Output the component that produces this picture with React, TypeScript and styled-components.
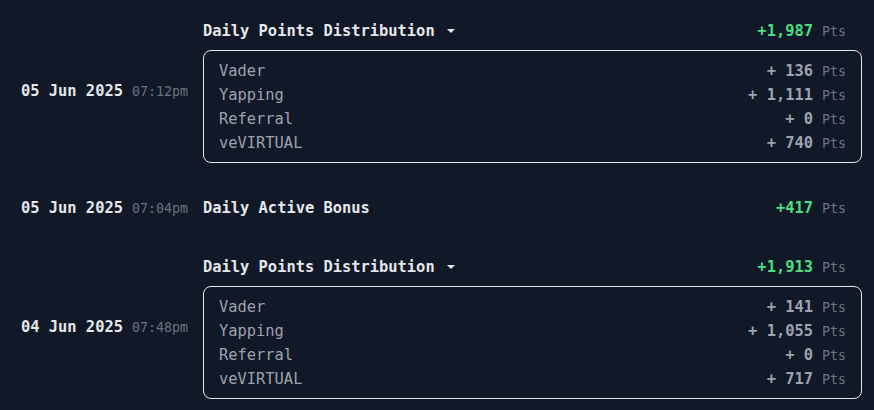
import React from 'react';
import styled, { createGlobalStyle } from 'styled-components';

const GlobalStyle = createGlobalStyle`
  html, body {
    margin: 0;
    background: #111827;
  }
  body {
    font-family: 'DejaVu Sans Mono', 'Liberation Mono', monospace;
  }
`;

const List = styled.div`
  display: flex;
  flex-direction: column;
  gap: 32px;
  padding: 18px 12px 0 21px;
`;

const Entry = styled.div<{ $single?: boolean }>`
  display: flex;
  align-items: center;
  padding-bottom: ${(p) => (p.$single ? '1px' : '0')};
`;

const When = styled.div`
  width: 182px;
  flex-shrink: 0;
  display: flex;
  align-items: baseline;
  gap: 9px;
  white-space: nowrap;
`;

const DateText = styled.span`
  color: #e5e7eb;
  font-weight: bold;
  font-size: 15.4px;
`;

const TimeText = styled.span`
  color: #6b7280;
  font-size: 13.3px;
`;

const Body = styled.div`
  flex: 1;
  display: flex;
  flex-direction: column;
  gap: 7px;
`;

const Header = styled.div<{ $single?: boolean }>`
  display: flex;
  align-items: center;
  justify-content: space-between;
  height: ${(p) => (p.$single ? '26px' : '25px')};
  padding-right: 16px;
`;

const Title = styled.div`
  display: flex;
  align-items: center;
  gap: 12px;
  color: #e5e7eb;
  font-weight: bold;
  font-size: 15.4px;
`;

const Caret = styled.span`
  width: 0;
  height: 0;
  border-left: 4px solid transparent;
  border-right: 4px solid transparent;
  border-top: 4px solid #e5e7eb;
`;

const Amount = styled.div`
  display: flex;
  align-items: baseline;
  gap: 9px;
`;

const Value = styled.span<{ $green?: boolean }>`
  color: ${(p) => (p.$green ? '#4ade80' : '#9ca3af')};
  font-weight: bold;
  font-size: 15.4px;
  white-space: pre;
`;

const Unit = styled.span`
  color: #6b7280;
  font-size: 13.3px;
`;

const Box = styled.div`
  border: 1px solid #e5e7eb;
  border-radius: 8px;
  padding: 8px 15px 7px;
`;

const Row = styled.div`
  display: flex;
  align-items: center;
  justify-content: space-between;
  height: 24px;
`;

const Label = styled.span`
  color: #9ca3af;
  font-size: 15.4px;
`;

type Part = { label: string; value: string };

type Item = {
  date: string;
  time: string;
  title: string;
  total: string;
  parts?: Part[];
};

const items: Item[] = [
  {
    date: '05 Jun 2025',
    time: '07:12pm',
    title: 'Daily Points Distribution',
    total: '+1,987',
    parts: [
      { label: 'Vader', value: '+ 136' },
      { label: 'Yapping', value: '+ 1,111' },
      { label: 'Referral', value: '+ 0' },
      { label: 'veVIRTUAL', value: '+ 740' },
    ],
  },
  {
    date: '05 Jun 2025',
    time: '07:04pm',
    title: 'Daily Active Bonus',
    total: '+417',
  },
  {
    date: '04 Jun 2025',
    time: '07:48pm',
    title: 'Daily Points Distribution',
    total: '+1,913',
    parts: [
      { label: 'Vader', value: '+ 141' },
      { label: 'Yapping', value: '+ 1,055' },
      { label: 'Referral', value: '+ 0' },
      { label: 'veVIRTUAL', value: '+ 717' },
    ],
  },
];

const App = () => (
  <>
    <GlobalStyle />
    <List>
      {items.map((item, i) => (
        <Entry key={i} $single={!item.parts}>
          <When>
            <DateText>{item.date}</DateText>
            <TimeText>{item.time}</TimeText>
          </When>
          <Body>
            <Header $single={!item.parts}>
              <Title>
                {item.title}
                {item.parts && <Caret />}
              </Title>
              <Amount>
                <Value $green>{item.total}</Value>
                <Unit>Pts</Unit>
              </Amount>
            </Header>
            {item.parts && (
              <Box>
                {item.parts.map((p) => (
                  <Row key={p.label}>
                    <Label>{p.label}</Label>
                    <Amount>
                      <Value>{p.value}</Value>
                      <Unit>Pts</Unit>
                    </Amount>
                  </Row>
                ))}
              </Box>
            )}
          </Body>
        </Entry>
      ))}
    </List>
  </>
);

export default App;
